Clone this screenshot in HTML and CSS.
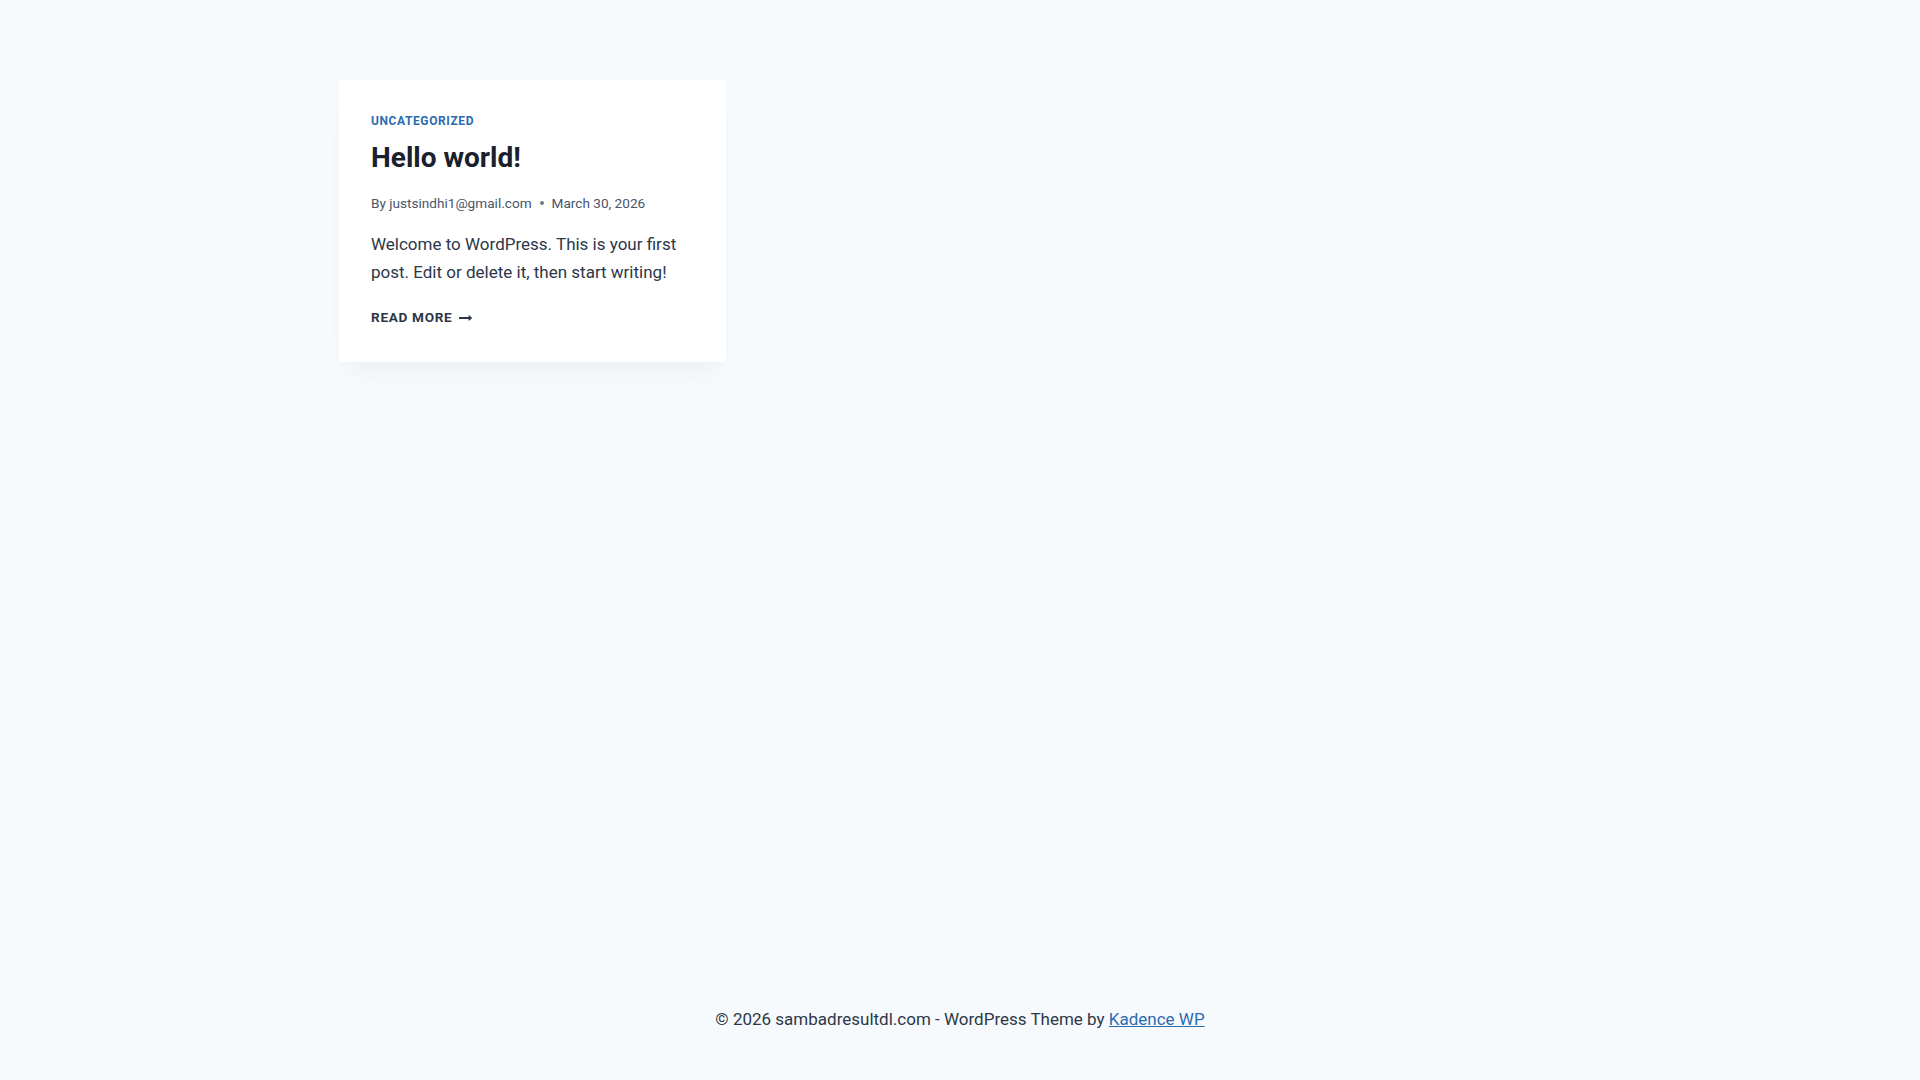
FILE: index.html
```html
<!DOCTYPE html>
<html lang="en">
<head>
<meta charset="utf-8">
<title>sambadresultdl.com</title>
<link rel="stylesheet" href="styles.css">
</head>
<body>
<div class="site">
  <main class="content-area">
    <div class="site-container">
      <div class="post-grid">
        <article class="loop-entry">
          <div class="entry-content-wrap">
            <div class="entry-taxonomies"><a href="#" class="cat-link">Uncategorized</a></div>
            <h2 class="entry-title"><a href="#">Hello world!</a></h2>
            <div class="entry-meta">
              <span class="posted-by">By <a href="#" class="author-link">justsindhi1@gmail.com</a></span><span class="meta-sep"></span><span class="posted-on">March 30, 2026</span>
            </div>
            <div class="entry-summary">
              <p>Welcome to WordPress. This is your first post. Edit or delete it, then start writing!</p>
            </div>
            <div class="entry-footer">
              <a href="#" class="more-link">Read More<svg class="arrow-icon" viewBox="0 0 27 28" aria-hidden="true"><path d="M27 13.953c0 0.141-0.063 0.281-0.156 0.375l-6 5.531c-0.156 0.141-0.359 0.172-0.547 0.094-0.172-0.078-0.297-0.25-0.297-0.453v-3.5h-19.5c-0.281 0-0.5-0.219-0.5-0.5v-3c0-0.281 0.219-0.5 0.5-0.5h19.5v-3.5c0-0.203 0.109-0.375 0.297-0.453s0.391-0.047 0.547 0.078l6 5.469c0.094 0.094 0.156 0.219 0.156 0.359v0z"/></svg></a>
            </div>
          </div>
        </article>
      </div>
    </div>
  </main>
  <footer class="site-footer">
    <div class="footer-inner">
      <p>&copy; 2026 sambadresultdl.com - WordPress Theme by <a href="#" class="footer-link">Kadence WP</a></p>
    </div>
  </footer>
</div>
</body>
</html>
```

FILE: styles.css
```css
html, body {
  margin: 0;
  padding: 0;
}

body {
  background: #f7fafc;
  color: #2d3748;
  font-family: Roboto, "Liberation Sans", sans-serif;
  font-size: 17px;
  line-height: 1.6;
  -webkit-font-smoothing: antialiased;
}

a {
  text-decoration: none;
  color: inherit;
}

.site {
  min-height: 100vh;
  display: flex;
  flex-direction: column;
}

.content-area {
  flex: 1 0 auto;
  margin: 80px 0;
}

.site-container {
  max-width: 1290px;
  margin: 0 auto;
  padding: 0 24px;
  box-sizing: border-box;
}

.post-grid {
  display: grid;
  grid-template-columns: repeat(3, minmax(0, 1fr));
  gap: 40px;
}

.loop-entry {
  background: #ffffff;
  border-radius: 4px;
  box-shadow: 0 15px 25px -10px rgba(0, 0, 0, 0.06);
}

.entry-content-wrap {
  padding: 32px 32px 32px;
}

.entry-taxonomies {
  font-size: 12px;
  line-height: 1.5;
  font-weight: 700;
  letter-spacing: 0.05em;
  text-transform: uppercase;
  margin-bottom: 7px;
}

.cat-link {
  color: #2b6cb0;
}

.entry-title {
  margin: 0;
  font-size: 28px;
  line-height: 1.5;
  font-weight: 700;
  color: #1a202c;
}

.entry-meta {
  margin-top: 13.5px;
  font-size: 13.6px;
  color: #4a5568;
  display: flex;
  align-items: center;
}

.meta-sep {
  display: inline-block;
  width: 4px;
  height: 4px;
  border-radius: 50%;
  background: currentColor;
  opacity: 0.8;
  margin: 0 8px 0 8px;
}

.entry-summary {
  margin-top: 16px;
  line-height: 28px;
}

.entry-summary p {
  margin: 0;
}

.entry-footer {
  margin-top: 16.5px;
}

.more-link {
  display: inline-flex;
  align-items: center;
  font-size: 13.6px;
  font-weight: 700;
  letter-spacing: 0.05em;
  text-transform: uppercase;
  color: #2d3748;
}

.arrow-icon {
  width: 13px;
  height: 14px;
  margin-left: 0.5em;
  fill: currentColor;
}

.site-footer {
  flex-shrink: 0;
}

.footer-inner {
  padding: 30px 24px 30px;
  text-align: center;
}

.footer-inner p {
  margin: 0 0 17px;
}

.footer-link {
  color: #2b6cb0;
  text-decoration: underline;
}
```
